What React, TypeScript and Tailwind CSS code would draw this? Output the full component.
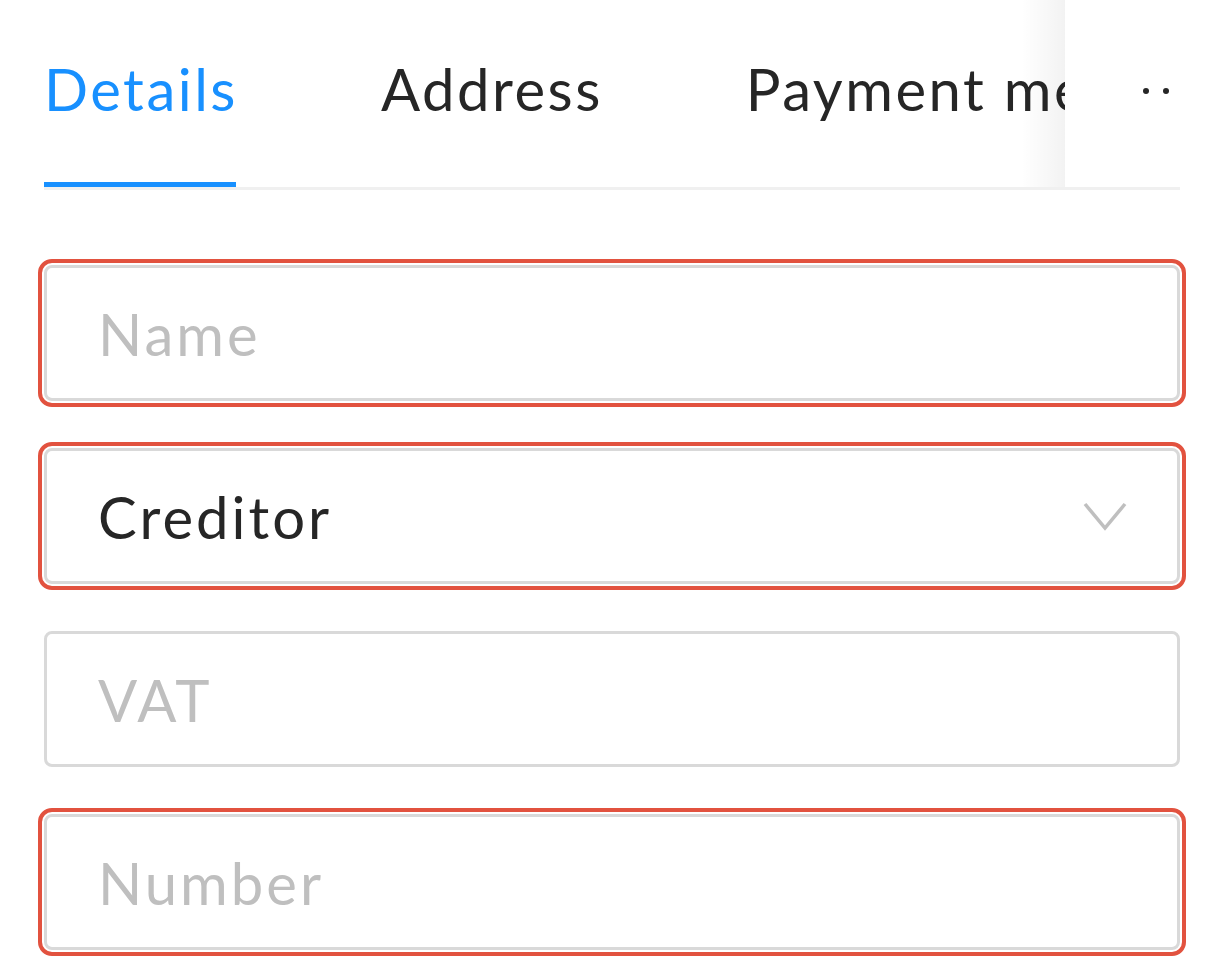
import { useState } from "react";

// ────────────────────────────────────────────
// Tabs
// ────────────────────────────────────────────

const TABS = ["Details", "Address", "Payment methods"];

function TabBar() {
  const [active, setActive] = useState(0);

  return (
    <div className="relative flex h-[190px] items-center overflow-hidden border-b-[3px] border-[#f0f0f0]">
      <div className="mb-[10px] flex items-center gap-[143px] whitespace-nowrap">
        {TABS.map((t, i) => (
          <button
            key={t}
            onClick={() => setActive(i)}
            className={`relative shrink-0 text-[58px] leading-none tracking-[2.5px] ${
              i === active ? "text-[#1890ff]" : "text-[#262626]"
            }`}
          >
            {t}
          </button>
        ))}
      </div>

      {/* ink bar */}
      <div className="absolute bottom-[-1px] left-0 h-[6px] w-[192px] bg-[#1890ff]" />

      {/* more (overflow) button with edge shadow */}
      <div className="absolute top-0 right-0 bottom-0 flex w-[115px] items-center bg-white">
        <div className="absolute top-0 bottom-0 left-[-44px] w-[44px] bg-gradient-to-r from-transparent to-black/[0.05]" />
        <div className="mb-[6px] ml-[78px] flex items-center gap-[14px]">
          <span className="h-[6px] w-[6px] shrink-0 rounded-full bg-[#262626]" />
          <span className="h-[6px] w-[6px] shrink-0 rounded-full bg-[#262626]" />
          <span className="h-[6px] w-[6px] shrink-0 rounded-full bg-[#262626]" />
        </div>
      </div>
    </div>
  );
}

// ────────────────────────────────────────────
// Fields
// ────────────────────────────────────────────

const boxBase =
  "flex h-[136px] w-full items-center rounded-[8px] border-[3px] border-[#d9d9d9] bg-white px-[51px] text-[58px] tracking-[3px]";
const errorRing = "outline-4 outline-offset-2 outline-[#e2523f]";

function TextField({ placeholder, error }: { placeholder: string; error?: boolean }) {
  return (
    <input
      placeholder={placeholder}
      className={`${boxBase} text-[#262626] placeholder:text-[#bfbfbf] focus:outline-none ${
        error ? errorRing : ""
      }`}
    />
  );
}

function SelectField({ value, error }: { value: string; error?: boolean }) {
  return (
    <div className={`${boxBase} justify-between text-[#262626] ${error ? errorRing : ""}`}>
      <span>{value}</span>
      <svg
        width="44"
        height="30"
        viewBox="0 0 44 30"
        fill="none"
        stroke="#bfbfbf"
        strokeWidth="3.5"
        className="mr-[-1px]"
      >
        <polyline points="2,3 22,27 42,3" />
      </svg>
    </div>
  );
}

// ────────────────────────────────────────────
// Page
// ────────────────────────────────────────────

export default function App() {
  return (
    <div className="min-h-screen bg-white px-[44px] font-['Lato',sans-serif]">
      <TabBar />

      <div className="mt-[75px] flex flex-col gap-[47px]">
        <TextField placeholder="Name" error />
        <SelectField value="Creditor" error />
        <TextField placeholder="VAT" />
        <TextField placeholder="Number" error />
      </div>
    </div>
  );
}
